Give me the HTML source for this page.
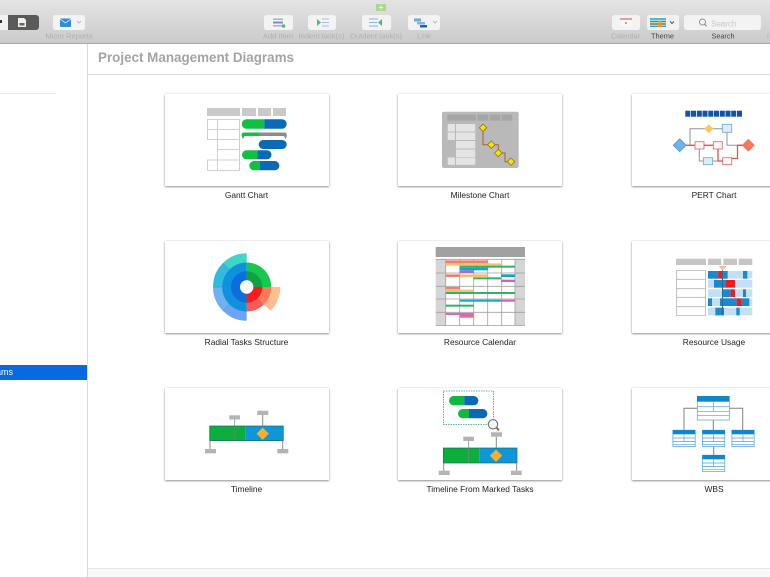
<!DOCTYPE html>
<html><head><meta charset="utf-8"><style>
html,body{margin:0;padding:0;background:#fff}
body{width:770px;height:578px;overflow:hidden;position:relative;font-family:"Liberation Sans",sans-serif}
svg{position:absolute;left:0;top:0;filter:blur(.35px)}
text{font-family:"Liberation Sans",sans-serif}
.c{position:absolute;width:164px;height:92px;background:#fff;box-shadow:0 1px 2px rgba(0,0,0,.4),0 0 2px rgba(0,0,0,.12)}
</style></head><body>
<div style="position:absolute;left:0;top:0;width:770px;height:43px;background:linear-gradient(#e4e4e4,#cbcbcb);border-bottom:1px solid #aaa"></div>
<div style="position:absolute;left:87px;top:44px;width:1px;height:534px;background:#dadada"></div>
<div style="position:absolute;left:88px;top:74px;width:682px;height:1px;background:#dcdcdc"></div>
<div style="position:absolute;left:0;top:93px;width:56px;height:1px;background:#e8e8e8"></div>
<div style="position:absolute;left:0;top:365px;width:87px;height:15px;background:#0a68e0"></div>
<div style="position:absolute;left:88px;top:568px;width:682px;height:9px;background:#f8f8f8;border-top:1px solid #e6e6e6;box-sizing:border-box"></div>
<div style="position:absolute;left:0;top:577px;width:770px;height:1px;background:#d4d4d4"></div>
<div class="c" style="left:165px;top:94px"></div><div class="c" style="left:398px;top:94px"></div><div class="c" style="left:632px;top:94px;width:150px"></div>
<div class="c" style="left:165px;top:241px"></div><div class="c" style="left:398px;top:241px"></div><div class="c" style="left:632px;top:241px;width:150px"></div>
<div class="c" style="left:165px;top:388px"></div><div class="c" style="left:398px;top:388px"></div><div class="c" style="left:632px;top:388px;width:150px"></div>
<svg width="770" height="578" viewBox="0 0 770 578" xmlns="http://www.w3.org/2000/svg">
<!-- toolbar -->
<rect x="-4" y="15" width="13" height="15" rx="2" fill="#f2f2f2"/><rect x="0" y="20" width="2" height="3" fill="#333"/>
<path d="M8 15H36a3 3 0 0 1 3 3V27a3 3 0 0 1-3 3H8Z" fill="#5a5a58"/>
<path d="M18 18h6l2 2v7h-8Z" fill="#eee"/><rect x="19.500" y="23" width="5" height="2.500" fill="#666"/>
<g fill="#f3f3f3"><rect x="53" y="15" width="32" height="15" rx="2.500"/><rect x="264" y="15" width="29" height="15" rx="2.500"/><rect x="308" y="15" width="28" height="15" rx="2.500"/><rect x="362" y="15" width="29" height="15" rx="2.500"/><rect x="408" y="15" width="32" height="15" rx="2.500"/><rect x="612" y="15" width="28" height="15" rx="2.500"/><rect x="647" y="15" width="32" height="15" rx="2.500"/><rect x="684" y="15" width="77" height="15" rx="2.500"/></g>
<rect x="60" y="18.500" width="11" height="8.500" rx="1" fill="#2f8de0"/><path d="M60 19l5.500 4 5.500-4" fill="none" stroke="#cfe6fa" stroke-width=".8"/>
<path d="M77 21l2 2 2-2" fill="none" stroke="#aaa" stroke-width=".8"/>
<rect x="273" y="18.500" width="10" height="1.500" fill="#9ab4d8"/><rect x="273" y="21.500" width="10" height="2" fill="#6e96cc"/><rect x="273" y="25" width="10" height="1.500" fill="#9ab4d8"/><circle cx="283.500" cy="26" r="1.800" fill="#55b96a"/>
<path d="M317 19v7l4-3.500Z" fill="#42c07a"/><path d="M322 19h7M322 22.500h7M322 26h7" stroke="#a8c0dc" stroke-width="1"/>
<path d="M369 19h9M369 22.500h8M369 26h9" stroke="#8db0dc" stroke-width="1"/><path d="M382 19v7l-4-3.500Z" fill="#42c07a"/>
<rect x="414" y="18.500" width="7" height="3" fill="#6ea8e0"/><rect x="417" y="22" width="8" height="2.500" fill="#85b5e0"/><rect x="420" y="25" width="7" height="2.500" fill="#1c62c8"/>
<path d="M433 21l2 2 2-2" fill="none" stroke="#aaa" stroke-width=".8"/>
<rect x="620" y="18" width="12" height="2" fill="#dca0a0"/><rect x="621" y="20" width="10" height="6" fill="#f8f8f8"/><rect x="625" y="22" width="2" height="2" fill="#aaa"/>
<rect x="650" y="18" width="16" height="9" fill="#e8f0e8"/><path d="M650 19h16" stroke="#1da0d8" stroke-width="1.500"/><path d="M650 21.500h16" stroke="#22a84a" stroke-width="1.500"/><path d="M650 24h16" stroke="#333" stroke-width="1"/><path d="M650 26.300h16" stroke="#1da0d8" stroke-width="1.300"/><rect x="658" y="21" width="3" height="6" fill="#ef9a2a"/>
<path d="M670 21.500l2 2 2-2" fill="none" stroke="#444" stroke-width=".9"/>
<circle cx="702.500" cy="22" r="3" fill="none" stroke="#777" stroke-width=".8"/><path d="M704.700 24.300l2 2" stroke="#777" stroke-width=".9"/>
<text x="711" y="26.500" font-size="8" fill="#c6c6c6">Search</text>
<rect x="376" y="4" width="10" height="7" fill="#a8d98c"/><path d="M379 7.500h4M381 5.500v4" stroke="#eef8e8" stroke-width="1"/>
<g font-size="7.500" text-anchor="middle" fill="#b0b0b0">
<text x="69" y="38.500" textLength="47" lengthAdjust="spacingAndGlyphs">Micro Reports</text>
<text x="278" y="38.500" textLength="30" lengthAdjust="spacingAndGlyphs">Add Item</text>
<text x="321.500" y="38.500" textLength="46" lengthAdjust="spacingAndGlyphs">Indent task(s)</text>
<text x="376" y="38.500" textLength="52" lengthAdjust="spacingAndGlyphs">Outdent task(s)</text>
<text x="424" y="38.500">Link</text>
<text x="625.500" y="38.500" textLength="29" lengthAdjust="spacingAndGlyphs">Calendar</text>
<text x="662.500" y="38.500" fill="#444" textLength="23" lengthAdjust="spacingAndGlyphs">Theme</text>
<text x="723" y="38.500" fill="#444" textLength="23" lengthAdjust="spacingAndGlyphs">Search</text>
<text x="769" y="38.500" fill="#bbb">F</text>
</g>
<text x="98" y="62" font-size="14" font-weight="700" fill="#a4a4a4" textLength="196" lengthAdjust="spacingAndGlyphs">Project Management Diagrams</text>
<text x="13" y="375" font-size="9" fill="#fff" text-anchor="end">Project Management Diagrams</text>
<!-- labels -->
<g font-size="8.400" fill="#222" text-anchor="middle">
<text x="246.500" y="198">Gantt Chart</text><text x="480" y="198">Milestone Chart</text><text x="714" y="198">PERT Chart</text>
<text x="246.500" y="345">Radial Tasks Structure</text><text x="480" y="345">Resource Calendar</text><text x="714" y="345">Resource Usage</text>
<text x="246.500" y="492">Timeline</text><text x="480" y="492">Timeline From Marked Tasks</text><text x="714" y="492">WBS</text>
</g>
<!-- Gantt -->
<g fill="#cacaca"><rect x="207" y="108" width="33" height="8"/><rect x="242" y="108" width="14" height="8"/><rect x="258" y="108" width="13" height="8"/><rect x="273" y="108" width="13" height="8"/></g>
<path d="M207.500 119.500H239.500V170.500H207.500ZM217.500 119.500V170.500M207.500 129.500H239.500M207.500 139.500H239.500M217.500 149.500H239.500M207.500 160H239.500" fill="none" stroke="#cfcfcf" stroke-width="1"/>
<rect x="207" y="140" width="10" height="19.500" fill="#fff"/>
<path d="M246.500 119.300H264.300V128.700H246.500a4.700 4.700 0 0 1 0-9.400Z" fill="#10c040"/><path d="M264.300 119.300H282a4.700 4.700 0 0 1 0 9.400H264.300Z" fill="#0a6ab8"/>
<path d="M243.500 132.500H259V136H244.500L243 139l-1.300-3v-1.500a2 2 0 0 1 1.800-2Z" fill="#10c040"/><path d="M259 132.500H285a1.800 1.800 0 0 1 1.800 2V136L285.500 139l-1.500-3H259Z" fill="#8c8c8c"/>
<rect x="258.700" y="140" width="28" height="9" rx="4.500" fill="#0a6ab8"/>
<path d="M246.500 150.300H257.300V159.300H246.500a4.500 4.500 0 0 1 0-9Z" fill="#10c040"/><path d="M257.300 150.300H267a4.500 4.500 0 0 1 0 9H257.300Z" fill="#0a6ab8"/>
<path d="M254 161H260V170.300H254a4.650 4.650 0 0 1 0-9.300Z" fill="#10c040"/><path d="M260 161H274.700a4.650 4.650 0 0 1 0 9.300H260Z" fill="#0a6ab8"/>
<!-- Milestone -->
<rect x="442" y="111.700" width="76.700" height="56.300" rx="2" fill="#b9b9b9"/>
<g fill="#a6a6a6"><rect x="447.300" y="114.700" width="28.700" height="6"/><rect x="477.300" y="114.700" width="11" height="6"/><rect x="489.700" y="114.700" width="10.600" height="6"/><rect x="501.700" y="114.700" width="10.600" height="6"/></g>
<g fill="#e4e4e4"><rect x="447.700" y="124" width="7.300" height="7.500"/><rect x="456" y="124" width="19.300" height="7.500"/><rect x="447.700" y="132.500" width="7.300" height="7.500"/><rect x="456" y="132.500" width="19.300" height="7.500"/><rect x="456" y="141" width="19.300" height="7.500"/><rect x="456" y="149.500" width="19.300" height="7.500"/><rect x="447.700" y="157.500" width="7.300" height="7.300"/><rect x="456" y="157.500" width="19.300" height="7.300"/></g>
<path d="M483 127.700V144.700H491.300M491.300 144.700H498.300V153H505V161.700H511" fill="none" stroke="#a4622c" stroke-width="1"/>
<g fill="#ffe000" stroke="#8a7a20" stroke-width=".8"><path d="M483 124l3.700 3.700-3.700 3.700-3.700-3.700Z"/><path d="M491.300 141l3.700 3.700-3.700 3.700-3.700-3.700Z"/><path d="M498.300 149.300l3.700 3.700-3.700 3.700-3.700-3.700Z"/><path d="M511 158l3.700 3.700-3.700 3.700-3.700-3.700Z"/></g>
<!-- PERT -->
<g fill="#1255a5"><rect x="685.300" y="110.700" width="5" height="6"/><rect x="691" y="110.700" width="5" height="6"/><rect x="696.800" y="110.700" width="5" height="6"/><rect x="702.500" y="110.700" width="5" height="6"/><rect x="708.300" y="110.700" width="5" height="6"/><rect x="714" y="110.700" width="5" height="6"/><rect x="719.800" y="110.700" width="5" height="6"/><rect x="725.500" y="110.700" width="5" height="6"/><rect x="731.200" y="110.700" width="5" height="6"/><rect x="737" y="110.700" width="5" height="6"/></g>
<path d="M690 145.300V128.700H705M712 128.700H722.300M727 132V145.300H743M699.300 149V161H703.300M712.700 161H722.700" fill="none" stroke="#8f9499" stroke-width="1"/>
<path d="M686 145.300H695M704 145.300H713.300M718 149V161H722.700M731.700 158.500H737.500V145.300H743" fill="none" stroke="#d9534f" stroke-width="1.300"/>
<path d="M679.700 138.800l6.500 6.500-6.500 6.500-6.500-6.500Z" fill="#6cb4ea" stroke="#4a90c8" stroke-width=".7"/>
<path d="M708.700 124.200l4.500 4.500-4.500 4.500-4.500-4.500Z" fill="#fcc565"/>
<path d="M748.300 138.800l6.500 6.500-6.500 6.500-6.500-6.500Z" fill="#f4775a"/>
<g fill="#dcedf7" stroke="#6ba8c8" stroke-width=".8"><rect x="722.300" y="124.300" width="9.400" height="8"/><rect x="703.300" y="157.700" width="9.400" height="7"/></g>
<g fill="#fdf4f4" stroke="#d9686a" stroke-width=".8"><rect x="695" y="141.700" width="9" height="7.300"/><rect x="713.300" y="141.700" width="9" height="7.300"/><rect x="722.700" y="157.700" width="9" height="7"/></g>
<!-- Radial -->
<g transform="translate(246.700 287)">
<path d="M0 0L0 -33.700A33.700 33.700 0 0 0 -23.830 -23.830Z" fill="#3fd6c6"/>
<path d="M0 0L-23.830 -23.830A33.700 33.700 0 0 0 -33.700 0Z" fill="#2fbbe2"/>
<path d="M0 0L-33.700 0A33.700 33.700 0 0 0 -23.830 23.830Z" fill="#6fb2f0"/>
<path d="M0 0L-23.830 23.830A33.700 33.700 0 0 0 0 33.700Z" fill="#6fa3f6"/>
<path d="M0 0L33.700 0A33.700 33.700 0 0 1 31.130 12.900Z" fill="#ffc08e"/>
<path d="M0 0L31.130 12.900A33.700 33.700 0 0 1 23.830 23.830Z" fill="#ffb999"/>
<path d="M0 -24.500A24.500 24.500 0 0 0 0 24.500Z" fill="#0f92de"/>
<path d="M0 0L0 -24.500A24.500 24.500 0 0 1 24.500 0Z" fill="#16c850"/>
<path d="M0 0L24.500 0A24.500 24.500 0 0 1 17.320 17.320Z" fill="#fb7a5a"/>
<path d="M0 0L17.320 17.320A24.500 24.500 0 0 1 0 24.500Z" fill="#f45a5a"/>
<path d="M0 -15.700A15.700 15.700 0 0 0 0 15.700Z" fill="#0a6edc"/>
<path d="M0 0L0 -15.700A15.700 15.700 0 0 1 15.700 0Z" fill="#12a040"/>
<path d="M0 0L15.700 0A15.700 15.700 0 0 1 0 15.700Z" fill="#f71c1c"/>
<path d="M-33.700 0H-15M-23.830 -23.830L-17.320 -17.320M-23.830 23.830L-17.320 17.320" stroke="#3d86b8" stroke-width=".5" fill="none"/>
<circle r="6.700" fill="#fff"/>
</g>
<!-- Calendar -->
<rect x="435.700" y="247" width="89.300" height="10" fill="#a1a1a1"/>
<rect x="435.700" y="259" width="10" height="66.700" fill="#d5d5d5"/><rect x="515" y="259" width="10" height="66.700" fill="#d5d5d5"/>
<path d="M445.700 259V325.700M459.700 259V325.700M473.700 259V325.700M487.700 259V325.700M501.700 259V325.700M515 259V325.700M435.700 259.300H525M435.700 273H525M435.700 286.300H525M435.700 299H525M435.700 312.300H525M435.700 325.500H525" fill="none" stroke="#a0a0a0" stroke-width=".8"/>
<g transform="translate(395 238) scale(.3333)">
<rect x="152" y="67" width="126" height="9" fill="#ee8070"/><rect x="152" y="76" width="166" height="7" fill="#f6c070"/><rect x="195" y="83" width="165" height="6" fill="#2fb36a"/><rect x="195" y="89" width="83" height="8" fill="#12a5c8"/><rect x="195" y="97" width="41" height="8" fill="#a070d0"/>
<rect x="152" y="109" width="42" height="8" fill="#ee8070"/><rect x="194" y="109" width="84" height="8" fill="#f6c070"/><rect x="236" y="118" width="82" height="6" fill="#2fb36a"/><rect x="318" y="109" width="42" height="8" fill="#12a5c8"/><rect x="318" y="125" width="42" height="7" fill="#d060c0"/>
<rect x="152" y="147" width="42" height="7" fill="#ee8070"/><rect x="152" y="155" width="84" height="7" fill="#f6c070"/><rect x="152" y="162" width="208" height="6" fill="#2fb36a"/>
<rect x="194" y="185" width="124" height="6" fill="#12a5c8"/><rect x="318" y="185" width="42" height="6" fill="#d060c0"/><rect x="152" y="200" width="84" height="6" fill="#2fb36a"/>
<rect x="152" y="225" width="84" height="6" fill="#d868c0"/><rect x="194" y="231" width="42" height="8" fill="#ee6a80"/>
</g>
<!-- Resource usage -->
<g fill="#c6c6c6"><rect x="676" y="258.700" width="30" height="6.300"/><rect x="708" y="258.700" width="13.300" height="6.300"/><rect x="723.300" y="258.700" width="13.700" height="6.300"/><rect x="738.700" y="258.700" width="13.600" height="6.300"/></g>
<path d="M676.500 270.500H705.500V315.500H676.500ZM676.500 279.300H705.500M676.500 288.700H705.500M676.500 297.300H705.500M676.500 306.700H705.500" fill="none" stroke="#b5b5b5" stroke-width=".8"/>
<g transform="translate(630 238) scale(.3333)">
<g fill="#c3e0f4"><rect x="234" y="99" width="133" height="23"/><rect x="234" y="126" width="133" height="23"/><rect x="234" y="154" width="133" height="23"/><rect x="234" y="181" width="133" height="23"/><rect x="234" y="209" width="133" height="23"/></g>
<g fill="#1d88cc"><rect x="234" y="99" width="31" height="23"/><rect x="276" y="99" width="17" height="23"/><rect x="339" y="99" width="13" height="23"/><rect x="252" y="126" width="36" height="23"/><rect x="277" y="154" width="25" height="23"/><rect x="339" y="154" width="9" height="23"/><rect x="234" y="181" width="12" height="23"/><rect x="270" y="181" width="50" height="23"/><rect x="335" y="181" width="23" height="23"/><rect x="256" y="209" width="26" height="23"/><rect x="319" y="209" width="10" height="23"/></g>
<g fill="#f01c1c"><rect x="265" y="99" width="11" height="23"/><rect x="288" y="126" width="27" height="23"/><rect x="302" y="154" width="13" height="23"/><rect x="320" y="181" width="15" height="23"/></g>
<rect x="276" y="97" width="3" height="135" fill="#2a6a90"/>
<path d="M268 85H288L278 97Z" fill="#f7cda6" stroke="#d8a070" stroke-width="1.500"/>
</g>
<!-- Timeline -->
<rect x="209.700" y="426" width="36" height="14.700" fill="#0eae3c"/><rect x="245.700" y="426" width="37.600" height="14.700" fill="#0f96d8"/>
<rect x="209.700" y="426" width="73.600" height="14.700" fill="none" stroke="#1c6a70" stroke-width=".7"/>
<path d="M234.700 419V440.700" stroke="#5d8d6a" stroke-width=".7"/><path d="M262.700 415V426M210 440.700V449M282.700 440.700V449" stroke="#8a8a8a" stroke-width="1"/>
<path d="M262.700 427.500l6.200 6.200-6.200 6.200-6.200-6.200Z" fill="#f6ae2d"/>
<g fill="#b4b4b4"><rect x="229.300" y="415.300" width="10.700" height="4.200"/><rect x="257.300" y="410.700" width="11" height="4.300"/><rect x="205" y="449" width="11" height="4.300"/><rect x="277.300" y="449" width="11" height="4.300"/></g>
<!-- Timeline from marked -->
<rect x="443.500" y="391" width="50" height="33.500" fill="none" stroke="#3a9a70" stroke-width=".8" stroke-dasharray="1.500 1"/>
<path d="M453.700 396H464.300V405.300H453.700a4.650 4.650 0 0 1 0-9.300Z" fill="#10b840"/><path d="M464.300 396H473.700a4.650 4.650 0 0 1 0 9.300H464.300Z" fill="#0a6ab8"/>
<path d="M462.700 409H469V418.300H462.700a4.650 4.650 0 0 1 0-9.300Z" fill="#10b840"/><path d="M469 409H482.700a4.650 4.650 0 0 1 0 9.300H469Z" fill="#0a6ab8"/>
<path d="M496.500 427.500L499 430.300" stroke="#9a5a28" stroke-width="1.800"/>
<circle cx="493" cy="424.300" r="4.700" fill="#f4f6f6" stroke="#666" stroke-width="1"/>
<rect x="443.300" y="448" width="36" height="15" fill="#0eae3c"/><rect x="479.300" y="448" width="37.700" height="15" fill="#0f96d8"/>
<rect x="443.300" y="448" width="73.700" height="15" fill="none" stroke="#1c6a70" stroke-width=".7"/>
<path d="M468.700 441V463" stroke="#6d8d7a" stroke-width=".7"/><path d="M496.300 436.700V448M443.700 463V470.700M516.700 463V470.700" stroke="#8a8a8a" stroke-width="1"/>
<path d="M496 449.500l6.200 6.200-6.200 6.200-6.200-6.200Z" fill="#f6ae2d"/>
<g fill="#b4b4b4"><rect x="463.300" y="436.700" width="10.700" height="4.300"/><rect x="491" y="432.300" width="11" height="4.400"/><rect x="438.700" y="470.700" width="11" height="4.300"/><rect x="511" y="470.700" width="10.700" height="4.300"/></g>
<!-- WBS -->
<path d="M697 408.300H684V430M729.300 408.300H742.700V430M713.300 420V430M713.700 446.700V455" fill="none" stroke="#808080" stroke-width="1"/>
<rect x="697.300" y="396.300" width="32" height="23.700" fill="#fff" stroke="#45a5d8" stroke-width=".7"/><rect x="697" y="396" width="32.300" height="5.700" fill="#0d87c8"/>
<path d="M697 406.700H729.300M697 411.300H729.300M697 415.700H729.300M713.300 401.700V411.300" stroke="#45a5d8" stroke-width=".7" fill="none"/>
<g>
<rect x="672.900" y="430.200" width="22.300" height="16.400" fill="#fff" stroke="#45a5d8" stroke-width=".7"/><rect x="672.700" y="430" width="22.600" height="4.300" fill="#0d87c8"/>
<path d="M672.700 438H695.300M672.700 441.500H695.300M672.700 444.300H695.300M684 434.300V441.500" stroke="#45a5d8" stroke-width=".7" fill="none"/>
</g>
<g transform="translate(29.600 0)">
<rect x="672.900" y="430.200" width="22.300" height="16.400" fill="#fff" stroke="#45a5d8" stroke-width=".7"/><rect x="672.700" y="430" width="22.600" height="4.300" fill="#0d87c8"/>
<path d="M672.700 438H695.300M672.700 441.500H695.300M672.700 444.300H695.300M684 434.300V441.500" stroke="#45a5d8" stroke-width=".7" fill="none"/>
</g>
<g transform="translate(59 0)">
<rect x="672.900" y="430.200" width="22.300" height="16.400" fill="#fff" stroke="#45a5d8" stroke-width=".7"/><rect x="672.700" y="430" width="22.600" height="4.300" fill="#0d87c8"/>
<path d="M672.700 438H695.300M672.700 441.500H695.300M672.700 444.300H695.300M684 434.300V441.500" stroke="#45a5d8" stroke-width=".7" fill="none"/>
</g>
<g transform="translate(29.600 25)">
<rect x="672.900" y="430.200" width="22.300" height="16.400" fill="#fff" stroke="#45a5d8" stroke-width=".7"/><rect x="672.700" y="430" width="22.600" height="4.300" fill="#0d87c8"/>
<path d="M672.700 438H695.300M672.700 441.500H695.300M672.700 444.300H695.300M684 434.300V441.500" stroke="#45a5d8" stroke-width=".7" fill="none"/>
</g>
</svg>
</body></html>
